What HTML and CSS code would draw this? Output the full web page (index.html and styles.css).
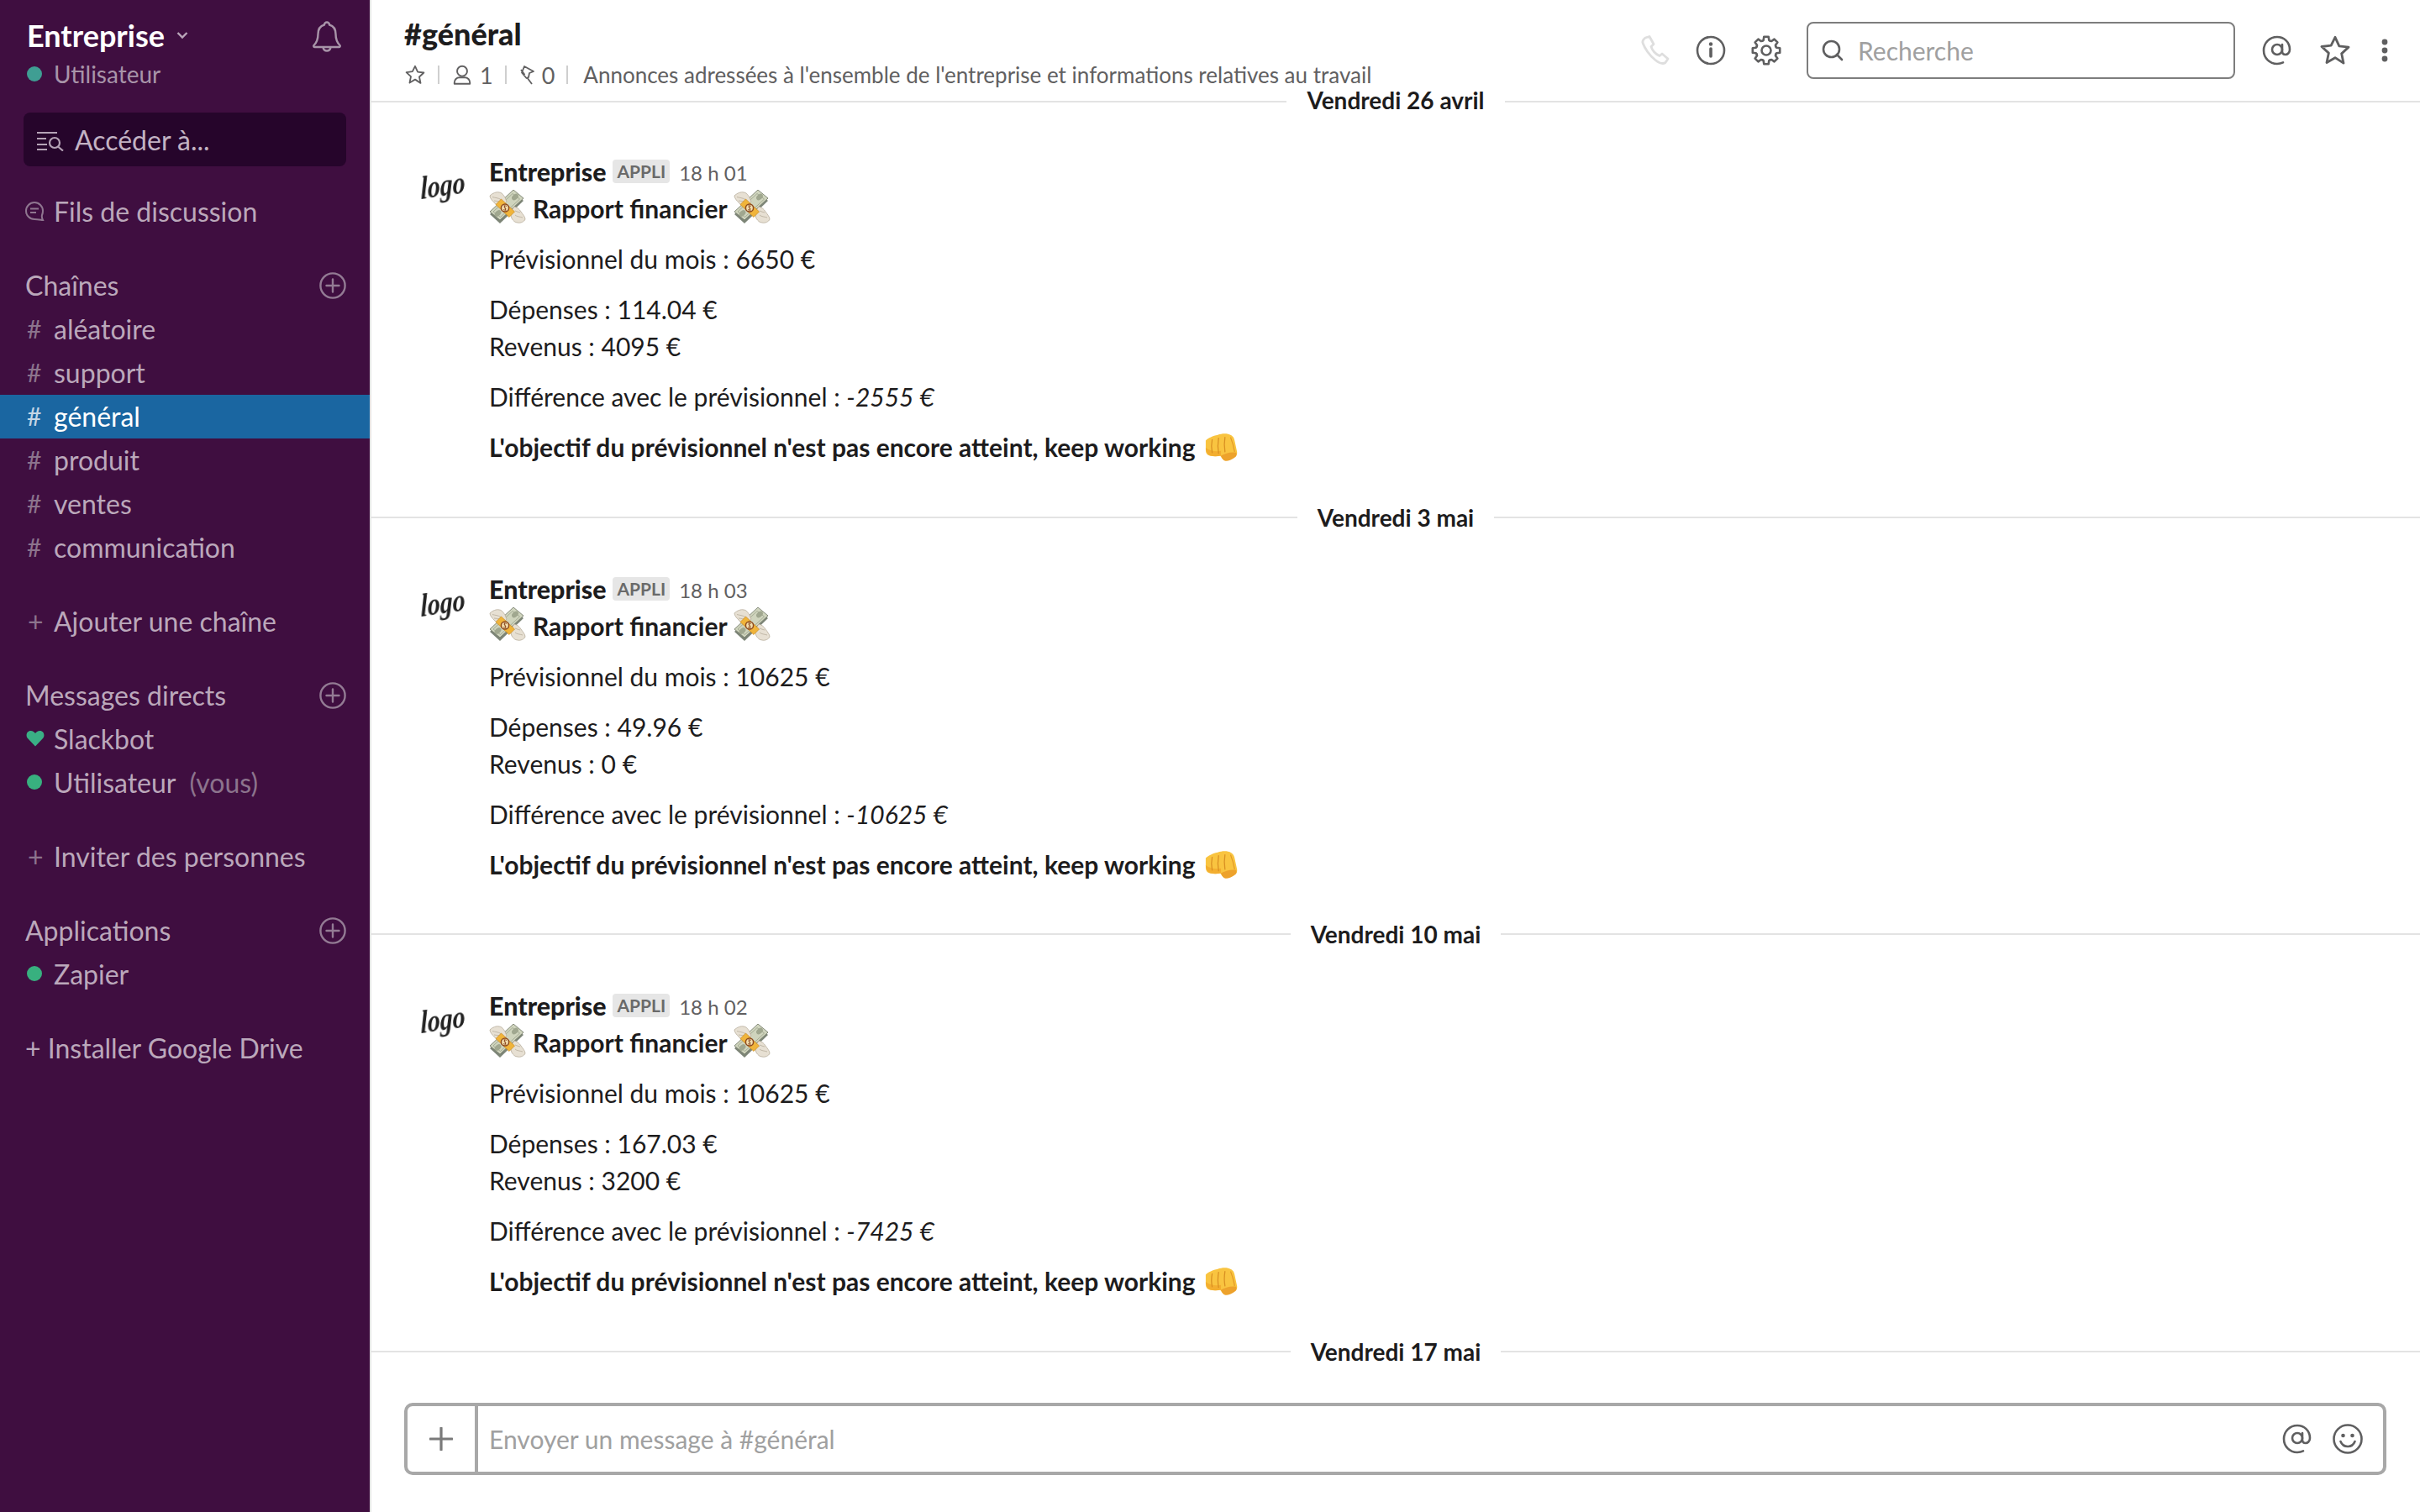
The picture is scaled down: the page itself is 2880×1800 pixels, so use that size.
FILE: index.html
```html
<!DOCTYPE html>
<html lang="fr">
<head>
<meta charset="utf-8">
<title>#général</title>
<link rel="stylesheet" href="styles.css">
</head>
<body>
<svg class="defs" width="0" height="0" aria-hidden="true">
  <symbol id="money" viewBox="0 0 44 44">
    <path d="M1 29L29 3l12 10-28 27z" fill="#7d8577"/>
    <path d="M1 26L29 0l12 10-28 26z" fill="#cfd4bd" stroke="#79806f" stroke-width=".9"/>
    <path d="M5 26L28 4.500l8.500 6.500-23 21.500z" fill="none" stroke="#9aa28c" stroke-width=".8"/>
    <ellipse cx="10.500" cy="28" rx="4.500" ry="3" transform="rotate(-43 10.500 28)" fill="#a0a78f"/>
    <ellipse cx="31" cy="8.500" rx="4.500" ry="3" transform="rotate(-43 31 8.500)" fill="#a0a78f"/>
    <path d="M1 7c3-3 8-5 11-4 3 0 5 3 7 6l2 5-5 6c-4 0-8-2-10-5C4 13 1 10 1 7z" fill="#e7e0d3" stroke="#b8ad9c" stroke-width=".8"/>
    <path d="M4 8.500c3 1 7 1 10 3M6 13c3 .5 6 .5 9 1.500" fill="none" stroke="#b8ad9c" stroke-width=".8"/>
    <path d="M43 35c-1 3-6 5-9 4-3 0-5-2-7-5l-2-7 5-7c4 1 6 3 8 6 2 3 5 6 5 9z" fill="#e7e0d3" stroke="#b8ad9c" stroke-width=".8"/>
    <path d="M40 33c-3-1-7-1-9-3M37 27c-2-.5-4-1-6-2" fill="none" stroke="#b8ad9c" stroke-width=".8"/>
    <path d="M14.500 11l16 15-6.500 6.500L8 17.500z" fill="#f0b43a" stroke="#c98a1f" stroke-width=".7"/>
    <circle cx="19" cy="21.500" r="4.600" fill="#f4dfae" stroke="#8d4a20" stroke-width="1.500"/>
    <path d="M21 19.500c-2-1.500-4 .5-2 2s0 3.500-2 2M18 18l2 7" fill="none" stroke="#8d4a20" stroke-width="1"/>
  </symbol>
  <symbol id="fist" viewBox="0 0 44 44">
    <path d="M2 12c3-3 9-6 15-7 4-1.500 9-2 13-1 4 1 7 3 8 8l3 14c.5 3-.5 5-2 6-4 3-8 5-12 5-3 0-5-3-7-6-4 1-9 1-13 0-3-1-5-3-5-7z" fill="#f9c440"/>
    <path d="M21 31c5-3 12-5 19-4 .8 3 .2 4.500-1 5.500-4 3-8 5-12 5-3 0-4.500-3-6-6.500z" fill="#eda22c"/>
    <path d="M2 21c5 4 13 5 19 4l0 6c-4 1-9 1-13 0-3-1-6-4-6-10z" fill="#f3ae30"/>
    <path d="M10 11c-1 5-1 11 0 16M18 9c-1 6-1 13 0 19M26 8c-1 6-1 12 0 18" fill="none" stroke="#d88f22" stroke-width="1.300" stroke-linecap="round"/>
    <path d="M33 8c2 5 4 12 5 18" fill="none" stroke="#e39a27" stroke-width="1.300"/>
  </symbol>
  <symbol id="plus-circle" viewBox="0 0 32 32">
    <circle cx="16" cy="16" r="14.600" fill="none" stroke="currentColor" stroke-width="2.400"/>
    <path d="M16 8.500v15M8.500 16h15" stroke="currentColor" stroke-width="2.400" stroke-linecap="round"/>
  </symbol>
  <symbol id="star" viewBox="0 0 24 24">
    <path d="M12 2.600l2.900 6.300 6.700.8-5 4.600 1.400 6.800L12 17.200l-6 3.500 1.400-6.800-5-4.600 6.700-.8z" fill="none" stroke="currentColor" stroke-width="1.700" stroke-linejoin="round"/>
  </symbol>
  <symbol id="at" viewBox="0 0 36 36">
    <circle cx="18" cy="17" r="6" fill="none" stroke="currentColor" stroke-width="2.600"/>
    <path d="M24 11v8c0 3 2 4 4 4s5-2 5-6C33 8 26 2 18 2 9 2 2 9 2 18s7 16 16 16c3 0 5-.6 7-1.600" fill="none" stroke="currentColor" stroke-width="2.600" stroke-linecap="round"/>
  </symbol>
  <path id="tooth" d="M-4.670 -11.270L-3.300 -12.200-2.700 -16.200H2.700L3.300 -12.200 4.670 -11.270" fill="none" stroke="currentColor" stroke-width="2.600" stroke-linejoin="round" stroke-linecap="round"/>
</svg>
<div class="app">
  <aside class="sidebar">
    <div class="team">
      <div class="team-text">
        <div class="team-name">Entreprise
          <svg class="chev" viewBox="0 0 14 10"><path d="M1.500 2l5.500 5.500L12.500 2" fill="none" stroke="currentColor" stroke-width="2.400"/></svg>
        </div>
        <div class="team-user"><span class="dot teal"></span>Utilisateur</div>
      </div>
      <svg class="bell" viewBox="0 0 36 38"><path d="M18 2.500a3 3 0 0 1 3 3c5 1.500 7.500 5.500 7.500 11 0 7 1.500 10 5 13.500.8 1-.1 2-1 2H3.500c-1 0-1.800-1-1-2 3.500-3.500 5-6.500 5-13.500 0-5.500 2.500-9.500 7.500-11a3 3 0 0 1 3-3zM13.500 32.500c.5 2.500 2.200 4 4.500 4s4-1.500 4.500-4" fill="none" stroke="currentColor" stroke-width="2.400" stroke-linejoin="round"/></svg>
    </div>
    <div class="jump">
      <svg class="jump-ico" viewBox="0 0 32 24"><path d="M0 2h24M0 9h11M0 16h12M0 22h12" stroke="currentColor" stroke-width="2.200"/><circle cx="21" cy="14" r="6" fill="none" stroke="currentColor" stroke-width="2.200"/><path d="M25 18.500l6 5" stroke="currentColor" stroke-width="2.200"/></svg>
      <span>Accéder à...</span>
    </div>
    <div class="row threads">
      <svg class="ico thread-ico" viewBox="0 0 24 24"><path d="M12 2a10 10 0 1 0 0 20c3 0 6 .5 10 1-1-2-1.500-4-1-6 .7-1.500 1-3 1-5A10 10 0 0 0 12 2z" fill="none" stroke="currentColor" stroke-width="2"/><path d="M7 9.500h10M7 14h7" stroke="currentColor" stroke-width="2"/></svg>
      <span>Fils de discussion</span>
    </div>

    <section class="group">
      <div class="row title">Chaînes<svg class="add"><use href="#plus-circle"/></svg></div>
      <div class="row"><span class="ico hash">#</span><span>aléatoire</span></div>
      <div class="row"><span class="ico hash">#</span><span>support</span></div>
      <div class="row active"><span class="ico hash">#</span><span>général</span></div>
      <div class="row"><span class="ico hash">#</span><span>produit</span></div>
      <div class="row"><span class="ico hash">#</span><span>ventes</span></div>
      <div class="row"><span class="ico hash">#</span><span>communication</span></div>
    </section>
    <section class="group">
      <div class="row"><span class="ico hash plus">+</span><span>Ajouter une chaîne</span></div>
    </section>
    <section class="group">
      <div class="row title">Messages directs<svg class="add"><use href="#plus-circle"/></svg></div>
      <div class="row"><span class="ico"><svg class="heart" viewBox="0 0 22 20"><path d="M11 19.500L2 10C-1 6.500 1 1 5.500 1 8 1 10 2.500 11 4c1-1.500 3-3 5.500-3C21 1 23 6.500 20 10z" fill="#3aaf85"/></svg></span><span>Slackbot</span></div>
      <div class="row"><span class="ico"><span class="dot"></span></span><span>Utilisateur</span><span class="you">(vous)</span></div>
    </section>
    <section class="group">
      <div class="row"><span class="ico hash plus">+</span><span>Inviter des personnes</span></div>
    </section>
    <section class="group">
      <div class="row title">Applications<svg class="add"><use href="#plus-circle"/></svg></div>
      <div class="row"><span class="ico"><span class="dot"></span></span><span>Zapier</span></div>
    </section>
    <section class="group">
      <div class="row title install">+ Installer Google Drive</div>
    </section>
  </aside>

  <main class="main">
    <header class="head">
      <div class="head-left">
        <h1 class="chan">#général</h1>
        <div class="meta">
          <svg class="meta-ico"><use href="#star"/></svg>
          <i class="sep"></i>
          <svg class="meta-ico" viewBox="0 0 24 24"><circle cx="12" cy="8" r="5.500" fill="none" stroke="currentColor" stroke-width="1.800"/><path d="M3.500 22v-1.500c0-3 2.500-5.500 5.500-5.500h6c3 0 5.500 2.500 5.500 5.500V22z" fill="none" stroke="currentColor" stroke-width="1.800" stroke-linejoin="round"/></svg>
          <span class="num">1</span>
          <i class="sep"></i>
          <svg class="meta-ico pin" viewBox="0 0 24 24"><path d="M7 2l11 6-5 2-1 5-2.500 1L4 9.500 5 7zM10 15l6 8M7.500 12L3 6" fill="none" stroke="currentColor" stroke-width="1.800" stroke-linejoin="round"/></svg>
          <span class="num zero">0</span>
          <i class="sep"></i>
          <span class="topic">Annonces adressées à l'ensemble de l'entreprise et informations relatives au travail</span>
        </div>
      </div>
      <div class="tools">
        <svg class="tool faint" viewBox="0 0 36 36"><path d="M6 3l5-1.500 5 9-3 3c1 4 5 9 10 11l3-2.500 7 6-3 4.500c-3 2-7 1-12-3C11 24 5 15 3 9c-.5-2 1-4.500 3-6z" fill="none" stroke="currentColor" stroke-width="2.800" stroke-linejoin="round"/></svg>
        <svg class="tool" viewBox="0 0 36 36"><circle cx="18" cy="18" r="16" fill="none" stroke="currentColor" stroke-width="2.600"/><path d="M18 16v9" stroke="currentColor" stroke-width="3.600" stroke-linecap="round"/><circle cx="18" cy="10.500" r="2.200" fill="currentColor"/></svg>
        <svg class="tool" viewBox="0 0 36 36">
          <g transform="translate(18 18)">
            <use href="#tooth"/><use href="#tooth" transform="rotate(45)"/><use href="#tooth" transform="rotate(90)"/><use href="#tooth" transform="rotate(135)"/><use href="#tooth" transform="rotate(180)"/><use href="#tooth" transform="rotate(225)"/><use href="#tooth" transform="rotate(270)"/><use href="#tooth" transform="rotate(315)"/>
          </g>
          <circle cx="18" cy="18" r="5.500" fill="none" stroke="currentColor" stroke-width="2.600"/>
        </svg>
        <div class="search">
          <svg class="search-ico" viewBox="0 0 26 26"><circle cx="11.500" cy="11.500" r="9.500" fill="none" stroke="currentColor" stroke-width="2.600"/><path d="M18 18l6 6" stroke="currentColor" stroke-width="2.600" stroke-linecap="round"/></svg>
          <span>Recherche</span>
        </div>
        <svg class="tool"><use href="#at"/></svg>
        <svg class="tool big"><use href="#star"/></svg>
        <svg class="kebab" viewBox="0 0 8 28"><circle cx="4" cy="4" r="3.400" fill="currentColor"/><circle cx="4" cy="14" r="3.400" fill="currentColor"/><circle cx="4" cy="24" r="3.400" fill="currentColor"/></svg>
      </div>
    </header>

    <div class="feed">
      <div class="day first"><span>Vendredi 26 avril</span></div>
      <article class="msg">
        <div class="logo"><span>logo</span></div>
        <div class="body">
          <div class="who"><b class="name">Entreprise</b><span class="badge">APPLI</span><span class="time">18 h 01</span></div>
          <div class="subject"><svg class="emoji"><use href="#money"/></svg><b>Rapport financier</b><svg class="emoji"><use href="#money"/></svg></div>
          <p>Prévisionnel du mois : 6650 €</p>
          <p>Dépenses : 114.04 €<br>Revenus : 4095 €</p>
          <p>Différence avec le prévisionnel : <em>-2555 €</em></p>
          <p><b>L'objectif du prévisionnel n'est pas encore atteint, keep working</b><svg class="emoji fist"><use href="#fist"/></svg></p>
        </div>
      </article>
      <div class="day"><span>Vendredi 3 mai</span></div>
      <article class="msg">
        <div class="logo"><span>logo</span></div>
        <div class="body">
          <div class="who"><b class="name">Entreprise</b><span class="badge">APPLI</span><span class="time">18 h 03</span></div>
          <div class="subject"><svg class="emoji"><use href="#money"/></svg><b>Rapport financier</b><svg class="emoji"><use href="#money"/></svg></div>
          <p>Prévisionnel du mois : 10625 €</p>
          <p>Dépenses : 49.96 €<br>Revenus : 0 €</p>
          <p>Différence avec le prévisionnel : <em>-10625 €</em></p>
          <p><b>L'objectif du prévisionnel n'est pas encore atteint, keep working</b><svg class="emoji fist"><use href="#fist"/></svg></p>
        </div>
      </article>
      <div class="day"><span>Vendredi 10 mai</span></div>
      <article class="msg">
        <div class="logo"><span>logo</span></div>
        <div class="body">
          <div class="who"><b class="name">Entreprise</b><span class="badge">APPLI</span><span class="time">18 h 02</span></div>
          <div class="subject"><svg class="emoji"><use href="#money"/></svg><b>Rapport financier</b><svg class="emoji"><use href="#money"/></svg></div>
          <p>Prévisionnel du mois : 10625 €</p>
          <p>Dépenses : 167.03 €<br>Revenus : 3200 €</p>
          <p>Différence avec le prévisionnel : <em>-7425 €</em></p>
          <p><b>L'objectif du prévisionnel n'est pas encore atteint, keep working</b><svg class="emoji fist"><use href="#fist"/></svg></p>
        </div>
      </article>
      <div class="day"><span>Vendredi 17 mai</span></div>
    </div>

    <footer class="composer">
      <div class="box">
        <div class="attach"><svg viewBox="0 0 28 28"><path d="M14 1v26M1 14h26" stroke="currentColor" stroke-width="3.200" stroke-linecap="round"/></svg></div>
        <div class="field">Envoyer un message à #général</div>
        <svg class="tool"><use href="#at"/></svg>
        <svg class="tool" viewBox="0 0 36 36"><circle cx="18" cy="18" r="16.500" fill="none" stroke="currentColor" stroke-width="2.600"/><circle cx="12.500" cy="14" r="2.300" fill="currentColor"/><circle cx="23.500" cy="14" r="2.300" fill="currentColor"/><path d="M9.500 21c1.500 4 5 6 8.500 6s7-2 8.500-6" fill="none" stroke="currentColor" stroke-width="2.600" stroke-linecap="round"/></svg>
      </div>
    </footer>
  </main>
</div>
</body>
</html>
```

FILE: styles.css
```css
* { box-sizing: border-box; }
html, body { margin: 0; height: 100%; }
body { font-family: Lato, "Liberation Sans", sans-serif; font-size: 30px; color: #1d1c1d; background: #fff; overflow: hidden; }
.defs { position: absolute; }
.app { display: flex; height: 1800px; }

/* sidebar */
.sidebar { width: 442px; flex: none; background: #3f0e40; border-right: 2px solid #e3e3e3; color: #bba8bb; font-size: 32px; }
.team { display: flex; justify-content: space-between; padding: 20px 33px 0 32px; height: 134px; }
.team-name { font-size: 36px; font-weight: 700; color: #fff; line-height: 44px; display: flex; align-items: center; }
.chev { width: 14px; height: 10px; margin-left: 14px; color: #b9a6b9; }
.team-user { display: flex; align-items: center; font-size: 28px; line-height: 36px; color: #a894a9; margin-top: 6px; }
.dot { display: block; width: 18px; height: 18px; border-radius: 50%; background: #38b07f; }
.dot.teal { background: #3f9e93; margin-right: 14px; }
.bell { width: 36px; height: 38px; margin-top: 4px; color: #a894a9; }
.jump { margin: 0 28px; height: 64px; background: #26052b; border-radius: 8px; display: flex; align-items: center; padding-left: 16px; color: #c3b3c4; }
.jump-ico { width: 32px; height: 24px; margin-right: 13px; margin-top: 4px; color: #b5a3b6; }
.row { position: relative; height: 52px; display: flex; align-items: center; padding-left: 32px; padding-bottom: 2px; white-space: nowrap; }
.threads { margin-top: 28px; padding-left: 29px; }
.threads .ico { width: 24px; height: 24px; margin-right: 11px; color: #8f7690; }
.ico { width: 32px; flex: none; display: flex; align-items: center; }
.hash { color: #8c748d; font-size: 30px; }
.plus { font-size: 32px; padding-left: 1px; }
.group { margin-top: 36px; }
.title { padding-left: 30px; justify-content: flex-start; }
.add { position: absolute; right: 28px; top: 10px; width: 32px; height: 32px; color: #937b94; }
.active { background: #1a66a1; color: #fff; }
.active .hash { color: #c4d6e6; }
.heart { width: 22px; height: 20px; margin-left: -1px; }
.you { margin-left: 16px; color: #8c748d; }
.install { padding-left: 30px; }

/* main */
.main { flex: 1; min-width: 0; display: flex; flex-direction: column; overflow: hidden; }
.head { flex: none; height: 122px; border-bottom: 2px solid #e3e3e3; display: flex; justify-content: space-between; padding: 0 38px 0 39px; }
.chan { margin: 18px 0 0; font-size: 36px; line-height: 44px; font-weight: 900; color: #1d1c1d; }
.meta { display: flex; align-items: center; height: 36px; margin-top: 9px; color: #616061; font-size: 26px; }
.meta-ico { width: 26px; height: 26px; flex: none; }
.pin { width: 24px; }
.num { margin-left: 8px; font-size: 27px; }
.zero { margin-left: 4px; }
.sep { width: 2px; height: 22px; background: #cfcfcf; margin: 0 14px; }
.topic { margin-left: 4px; }
.tools { display: flex; align-items: center; height: 120px; color: #5f5f60; }
.tool { width: 36px; height: 36px; flex: none; margin-left: 30px; }
.big { width: 40px; height: 40px; margin-left: 31px; }
.faint { color: #dedede; }
.search { width: 510px; height: 68px; border: 2px solid #7d7d7d; border-radius: 8px; margin: 0 32px 0 30px; display: flex; align-items: center; padding-left: 16px; color: #a0a0a0; font-size: 30px; }
.search-ico { width: 26px; height: 26px; margin-right: 17px; color: #5f5f60; }
.tools .search + .tool { margin-left: 0; }
.kebab { width: 8px; height: 28px; margin-left: 35px; flex: none; }

/* feed */
.feed { flex: 1; min-height: 0; position: relative; }
.day { display: flex; align-items: center; height: 44px; font-size: 28px; font-weight: 700; color: #1d1c1d; }
.day::before, .day::after { content: ""; flex: 1; height: 2px; background: #e3e3e3; }
.day span { padding: 0 24px; line-height: 30px; background: #fff; }
.first { margin-top: -25px; position: relative; }
.first::before, .first::after { background: transparent; }
.msg { display: flex; padding: 41px 40px 39.500px 58px; }
.logo { width: 82px; flex: none; }
.logo span { display: block; width: 54px; margin-top: 17px; text-align: center; font-family: "Liberation Serif", serif; font-style: italic; font-weight: 700; font-size: 30px; line-height: 44px; color: #222; transform: rotate(-8deg) scaleY(1.25) skewX(-8deg); filter: blur(.6px); }
.body { flex: 1; line-height: 44px; }
.body p { margin: 16px 0 0; }
.who { display: flex; align-items: center; height: 44px; }
.name { font-size: 30.400px; font-weight: 900; }
.badge { margin-left: 8px; height: 28px; line-height: 28px; padding: 0 5px; background: #e6e6e6; border-radius: 4px; font-size: 21px; color: #6a6a6a; font-weight: 700; }
.time { margin-left: 11px; font-size: 24px; color: #616061; margin-top: 4px; }
.subject { display: flex; align-items: center; height: 44px; }
.subject b { margin: 0 7px 0 8px; }
.emoji { width: 44px; height: 44px; flex: none; }
.fist { vertical-align: top; margin-left: 10px; width: 42px; height: 42px; transform: translateY(3px); }

/* composer */
.composer { flex: none; height: 132px; padding: 2px 40px 0 39px; background: #fff; position: relative; }
.box { height: 86px; border: 4px solid #a8a8a8; border-radius: 10px; display: flex; align-items: center; padding-right: 24px; color: #5f5f60; background: #fff; }
.attach { width: 84px; height: 100%; border-right: 4px solid #a8a8a8; display: flex; align-items: center; justify-content: center; color: #7a7a7a; }
.attach svg { width: 28px; height: 28px; }
.field { flex: 1; padding-left: 13px; color: #a0a0a0; font-size: 30px; }
.box .tool { margin-left: 24px; width: 36px; height: 36px; }
```
